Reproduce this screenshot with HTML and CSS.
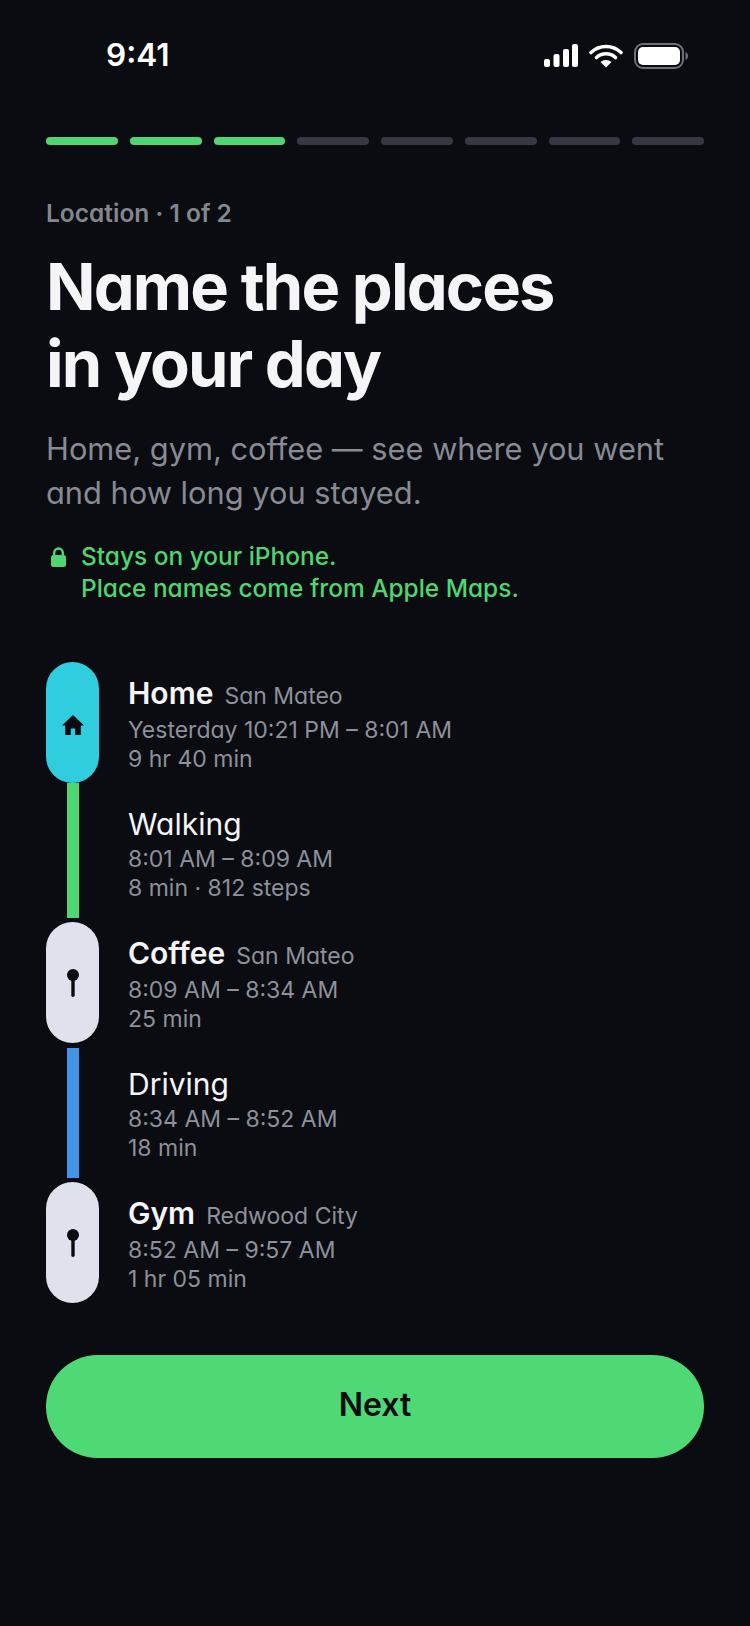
FILE: index.html
```html
<!DOCTYPE html>
<html lang="en">
<head>
    <meta charset="UTF-8">
    <meta name="viewport" content="width=device-width, initial-scale=1.0">
    <title>Name the places in your day</title>
    <link rel="stylesheet" href="styles.css">
</head>
<body>
    <div class="status-bar">
        <span class="status-time">9:41</span>
        <div class="status-icons">
            <svg width="34" height="23" viewBox="0 0 34 23"><rect x="0" y="15" width="6" height="8" rx="2" fill="#fff"/><rect x="9.500" y="10" width="6" height="13" rx="2" fill="#fff"/><rect x="19" y="5" width="6" height="18" rx="2" fill="#fff"/><rect x="28" y="0" width="6" height="23" rx="2" fill="#fff"/></svg>
            <svg width="34" height="24" viewBox="0 0 34 24"><path d="M2 8.500C10.500 0.500 23.500 0.500 32 8.500M7.500 13.500C13 8.500 21 8.500 26.500 13.500" fill="none" stroke="#fff" stroke-width="3.600" stroke-linecap="round"/><path d="M17 23.500L11.500 18C14.500 15.300 19.500 15.300 22.500 18Z" fill="#fff"/></svg>
            <svg width="54" height="26" viewBox="0 0 54 26"><rect x="1" y="1" width="48" height="24" rx="8" fill="none" stroke="#6f7075" stroke-width="2"/><rect x="4" y="4" width="42" height="18" rx="5" fill="#fff"/><path d="M51.500 9C53.500 10 54 11.500 54 13C54 14.500 53.500 16 51.500 17Z" fill="#6f7075"/></svg>
        </div>
    </div>

    <div class="content">
        <div class="progress">
            <span class="progress-bar done"></span>
            <span class="progress-bar done"></span>
            <span class="progress-bar done"></span>
            <span class="progress-bar"></span>
            <span class="progress-bar"></span>
            <span class="progress-bar"></span>
            <span class="progress-bar"></span>
            <span class="progress-bar"></span>
        </div>

        <p class="step-label">Location · 1 of 2</p>
        <h1 class="title">Name the places<br>in your day</h1>
        <p class="subtitle">Home, gym, coffee — see where you went<br>and how long you stayed.</p>

        <div class="privacy">
            <svg class="lock-icon" width="15" height="20" viewBox="0 0 15 20"><path d="M3.200 9V5.800a4.300 4.300 0 0 1 8.600 0V9" fill="none" stroke="#4fd673" stroke-width="2.400"/><rect x="0" y="8" width="15" height="12" rx="2.500" fill="#4fd673"/></svg>
            <p>Stays on your iPhone.<br>Place names come from Apple Maps.</p>
        </div>

        <div class="timeline">
            <div class="stay-row">
                <div class="pill pill-home">
                    <svg class="home-icon" width="22" height="20" viewBox="0 0 22 20"><path d="M11 0L0 10.500h3.200V20h5.600v-6.500h4.400V20h5.600v-9.500H22Z" fill="#0a0c11"/></svg>
                </div>
                <div class="row-text">
                    <div class="place-line"><span class="place-name">Home</span><span class="place-city">San Mateo</span></div>
                    <div class="row-detail">Yesterday 10:21 PM – 8:01 AM</div>
                    <div class="row-detail">9 hr 40 min</div>
                </div>
            </div>

            <div class="move-row">
                <div class="rail"><span class="rail-line rail-walk"></span></div>
                <div class="row-text">
                    <div class="move-name">Walking</div>
                    <div class="row-detail">8:01 AM – 8:09 AM</div>
                    <div class="row-detail">8 min · 812 steps</div>
                </div>
            </div>

            <div class="stay-row">
                <div class="pill">
                    <svg width="12" height="28" viewBox="0 0 12 28"><circle cx="6" cy="6" r="6" fill="#0a0c11"/><rect x="4.300" y="8" width="3.400" height="20" rx="1.700" fill="#0a0c11"/></svg>
                </div>
                <div class="row-text">
                    <div class="place-line"><span class="place-name">Coffee</span><span class="place-city">San Mateo</span></div>
                    <div class="row-detail">8:09 AM – 8:34 AM</div>
                    <div class="row-detail">25 min</div>
                </div>
            </div>

            <div class="move-row">
                <div class="rail"><span class="rail-line rail-drive"></span></div>
                <div class="row-text">
                    <div class="move-name">Driving</div>
                    <div class="row-detail">8:34 AM – 8:52 AM</div>
                    <div class="row-detail">18 min</div>
                </div>
            </div>

            <div class="stay-row">
                <div class="pill">
                    <svg width="12" height="28" viewBox="0 0 12 28"><circle cx="6" cy="6" r="6" fill="#0a0c11"/><rect x="4.300" y="8" width="3.400" height="20" rx="1.700" fill="#0a0c11"/></svg>
                </div>
                <div class="row-text">
                    <div class="place-line"><span class="place-name">Gym</span><span class="place-city">Redwood City</span></div>
                    <div class="row-detail">8:52 AM – 9:57 AM</div>
                    <div class="row-detail">1 hr 05 min</div>
                </div>
            </div>
        </div>

        <button class="next-button">Next</button>
    </div>
</body>
</html>
```

FILE: styles.css
```css
* {
    box-sizing: border-box;
}

body {
    margin: 0;
    width: 750px;
    height: 1626px;
    overflow: hidden;
    background-color: #0a0c11;
    color: #fff;
    font-family: Inter, "Noto Sans", sans-serif;
    font-feature-settings: "cv11";
}

p {
    margin: 0;
}

.status-bar {
    display: flex;
    justify-content: space-between;
    align-items: center;
    height: 108px;
    padding: 0 62px 0 106px;
}

.status-time {
    font-size: 31.500px;
    font-weight: 600;
}

.status-icons {
    display: flex;
    align-items: center;
    gap: 11px;
    margin-top: 3px;
}

.content {
    padding: 0 46px;
}

.progress {
    display: flex;
    gap: 12px;
    margin-top: 29px;
}

.progress-bar {
    flex: 1;
    height: 8px;
    border-radius: 4px;
    background-color: #363943;
}

.progress-bar.done {
    background-color: #4fd673;
}

.step-label {
    margin-top: 52px;
    font-size: 24.500px;
    line-height: 32px;
    font-weight: 600;
    color: #85878f;
}

.title {
    margin: 19px 0 0;
    font-size: 65px;
    line-height: 77px;
    font-weight: 700;
    letter-spacing: -1.850px;
    color: #f5f5f7;
}

.subtitle {
    margin-top: 25px;
    font-size: 30.800px;
    line-height: 44px;
    color: #888a94;
}

.privacy {
    display: flex;
    gap: 15px;
    margin-top: 25px;
    padding-left: 5px;
    color: #4fd673;
    font-size: 24.450px;
    line-height: 32px;
    font-weight: 500;
}

.lock-icon {
    margin-top: 7px;
}

.timeline {
    margin-top: 58px;
}

.stay-row,
.move-row {
    display: flex;
    gap: 29px;
}

.stay-row {
    height: 121px;
}

.move-row {
    height: 139px;
}

.pill {
    display: flex;
    justify-content: center;
    align-items: center;
    flex: none;
    width: 53px;
    height: 121px;
    border-radius: 27px;
    background-color: #dfe1ec;
}

.pill-home {
    background-color: #2fcddd;
}

.home-icon {
    margin-top: 5px;
}

.rail {
    display: flex;
    justify-content: center;
    flex: none;
    width: 53px;
}

.rail-line {
    width: 12px;
    margin-bottom: 4px;
}

.rail-walk {
    background-color: #4fd673;
}

.rail-drive {
    margin-top: 5px;
    background-color: #4394e8;
}

.stay-row .row-text {
    padding-top: 12px;
}

.move-row .row-text {
    padding-top: 22px;
}

.place-line {
    display: flex;
    align-items: baseline;
    gap: 11px;
    height: 42px;
}

.place-name {
    font-size: 30px;
    line-height: 38px;
    font-weight: 600;
    color: #f5f5f7;
}

.place-city {
    font-size: 23px;
    color: #8e909b;
}

.move-name {
    height: 40px;
    font-size: 30px;
    line-height: 38px;
    color: #f5f5f7;
}

.row-detail {
    font-size: 23px;
    line-height: 29px;
    color: #8e909b;
}

.next-button {
    display: block;
    width: 100%;
    height: 103px;
    margin-top: 52px;
    padding-bottom: 5px;
    border: none;
    border-radius: 52px;
    background-color: #4fd975;
    color: #0a0c11;
    font-family: inherit;
    font-size: 32px;
    font-weight: 600;
}
```
